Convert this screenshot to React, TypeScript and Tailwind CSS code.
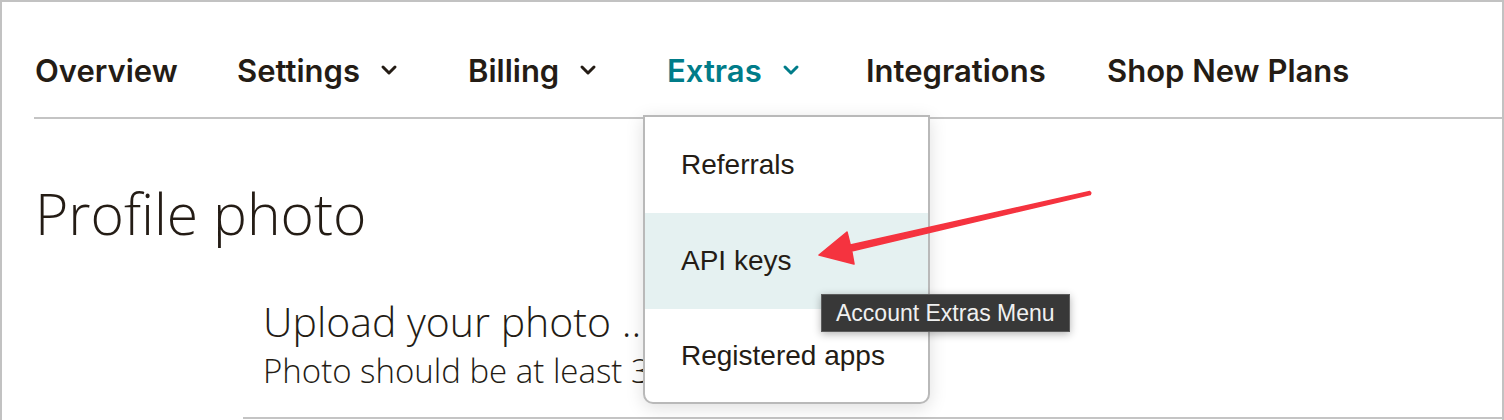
import React from 'react';

const Chevron = ({ color }: { color: string }) => (
  <svg width="18" height="12" viewBox="0 0 18 12" className="ml-[20px] shrink-0" fill="none">
    <path d="M3 3 L9 9 L15 3" stroke={color} strokeWidth="3" strokeLinecap="round" strokeLinejoin="round" />
  </svg>
);

export default function App() {
  const nav = [
    { label: 'Overview', menu: false, width: 'w-[202px]' },
    { label: 'Settings', menu: true, width: 'w-[231px]' },
    { label: 'Billing', menu: true, width: 'w-[199px]' },
    { label: 'Extras', menu: true, active: true, width: 'w-[199px]' },
    { label: 'Integrations', menu: false, width: 'w-[241px]' },
    { label: 'Shop New Plans', menu: false, width: 'w-auto' },
  ];

  return (
    <div className="relative w-[1504px] h-[420px] overflow-hidden bg-white border-t-2 border-x-2 border-[#c2c2c2] text-[#241c15]">
      {/* Top nav */}
      <nav className="ml-[32px] pl-[1px] pt-[52px] pb-[31px] flex items-center border-b-2 border-[#c4c4c4] font-['Inter',Arial,sans-serif] font-semibold text-[31px] leading-none">
        {nav.map((item) => (
          <div key={item.label} className={`${item.width} h-[32px] flex items-center shrink-0`}>
            <span className={item.active ? 'text-[#007c89]' : ''}>{item.label}</span>
            {item.menu && <Chevron color={item.active ? '#007c89' : '#241c15'} />}
          </div>
        ))}
      </nav>

      {/* Page content */}
      <main className="font-['Open_Sans',Arial,sans-serif] font-light">
        <h1 className="ml-[33px] mt-[66px] text-[57px] leading-none whitespace-nowrap">Profile photo</h1>
        <section className="ml-[241px] mt-[59px] pb-[30px] border-b-2 border-[#c4c4c4]">
          <div className="ml-[20px] w-[380px] overflow-hidden whitespace-nowrap">
            <h2 className="text-[41px] leading-none">Upload your photo ...</h2>
            <p className="mt-[12px] text-[33px] leading-none">Photo should be at least 300px × 300px</p>
          </div>
        </section>
      </main>

      {/* Extras dropdown */}
      <div className="absolute left-[641px] top-[113px] w-[287px] bg-white border-2 border-[#b9b9b9] rounded-b-[10px] shadow-[0_4px_18px_rgba(0,0,0,0.13)] font-['Liberation_Sans',Arial,sans-serif] text-[28px] leading-none">
        <div className="h-[96px] pl-[36px] flex items-center">Referrals</div>
        <div className="h-[96px] pl-[36px] flex items-center bg-[#e5f1f1]">API keys</div>
        <div className="h-[93px] pl-[36px] flex items-center">Registered apps</div>
      </div>

      {/* Tooltip */}
      <div className="absolute left-[819px] top-[292px] h-[38px] px-[14px] flex items-center bg-[#383838] border border-[#5c5c5c] shadow-[0_2px_8px_rgba(0,0,0,0.3)] font-['Liberation_Sans',Arial,sans-serif] text-[23px] leading-none text-[#f0f0f0]">
        Account Extras Menu
      </div>

      {/* Annotation arrow */}
      <svg className="absolute left-[808px] top-[178px] pointer-events-none" width="290" height="95" viewBox="810 180 290 95">
        <polygon
          points="1089.7,191.5 850.3,245.1 847,232 819,255 854,264 851.7,250.9 1090.3,194.5"
          fill="#f5333f"
          stroke="#f5333f"
          strokeWidth="1.5"
          strokeLinejoin="round"
        />
        <circle cx="1090" cy="193" r="1.6" fill="#f5333f" />
      </svg>
    </div>
  );
}
